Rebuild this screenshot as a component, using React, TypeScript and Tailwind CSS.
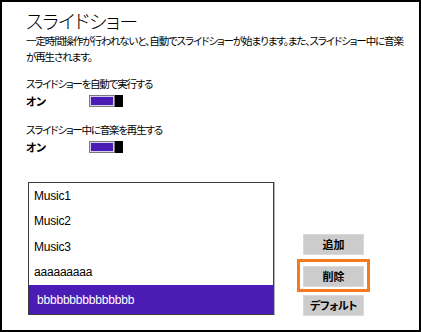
import React from 'react';

const jp = "font-['Noto_Sans_CJK_JP',sans-serif] [font-feature-settings:'palt']";

type ToggleRowProps = {
    label: string;
};

const ToggleRow: React.FC<ToggleRowProps> = ({ label }) => {
    return (
        <div className="flex flex-col">
            <p className={`${jp} text-[10.5px] leading-[16px] tracking-[-1.2px] whitespace-nowrap`}>{label}</p>
            <div className="flex flex-row items-center mt-[2px]">
                <span className={`${jp} text-[11px] leading-[14px] font-bold tracking-[-0.5px] w-[63px]`}>オン</span>
                {/* switch: purple track with the black thumb on the right */}
                <div className="flex flex-row h-[12px] w-[34px]">
                    <div className="flex-1 border border-[#7a7a7a] bg-[#4a1bb5] shadow-[inset_0_0_0_1px_#d8d0ee]"></div>
                    <div className="w-[8px] bg-black"></div>
                </div>
            </div>
        </div>
    );
};

const musics = ['Music1', 'Music2', 'Music3', 'aaaaaaaaa'];

export default function App() {
    return (
        <div className="w-[421px] h-[332px] border-2 border-black bg-white pl-[24px] pt-[7px] text-black overflow-hidden">
            <h1 className={`${jp} text-[19px] leading-[24px] font-light tracking-[-0.6px]`}>スライドショー</h1>
            <p className={`${jp} text-[10.5px] leading-[16px] tracking-[-1.1px] whitespace-nowrap`}>
                一定時間操作が行われないと、自動でスライドショーが始まります。また、スライドショー中に音楽
                <br />
                が再生されます。
            </p>

            <div className="flex flex-col gap-[14px] mt-[11px]">
                <ToggleRow label="スライドショーを自動で実行する" />
                <ToggleRow label="スライドショー中に音楽を再生する" />
            </div>

            <div className="flex flex-row items-end mt-[28px]">
                <div className="ml-[2px] w-[246px] h-[133px] border border-[#3c3c3c] shadow-[1px_0_0_#b5b5b5] flex flex-col">
                    {musics.map((m) => (
                        <div key={m} className="h-[25.5px] flex items-center pl-[5px] font-['Liberation_Sans',sans-serif] text-[12px] tracking-[-0.2px]">
                            {m}
                        </div>
                    ))}
                    <div className="flex-1 flex items-center pl-[8px] bg-[#4a1bb5] text-white font-['Liberation_Sans',sans-serif] text-[12px] tracking-[-0.2px]">
                        bbbbbbbbbbbbbbb
                    </div>
                </div>

                <div className="flex flex-col gap-[8px] ml-[29px] mb-[-1px]">
                    <button className={`${jp} w-[61px] h-[21px] bg-[#cccccc] border border-[#d9d9d9] text-[11px] font-bold`}>追加</button>
                    <div className="relative">
                        <button className={`${jp} w-[61px] h-[21px] bg-[#cccccc] border border-[#d9d9d9] text-[11px] font-bold`}>削除</button>
                        <span className="absolute -left-[6px] -right-[6px] -top-[4px] -bottom-[5px] border-[3px] border-[#f47a1e]"></span>
                    </div>
                    <button className={`${jp} w-[61px] h-[21px] bg-[#cccccc] border border-[#d9d9d9] text-[11px] font-bold tracking-[-0.5px]`}>デフォルト</button>
                </div>
            </div>
        </div>
    );
}
